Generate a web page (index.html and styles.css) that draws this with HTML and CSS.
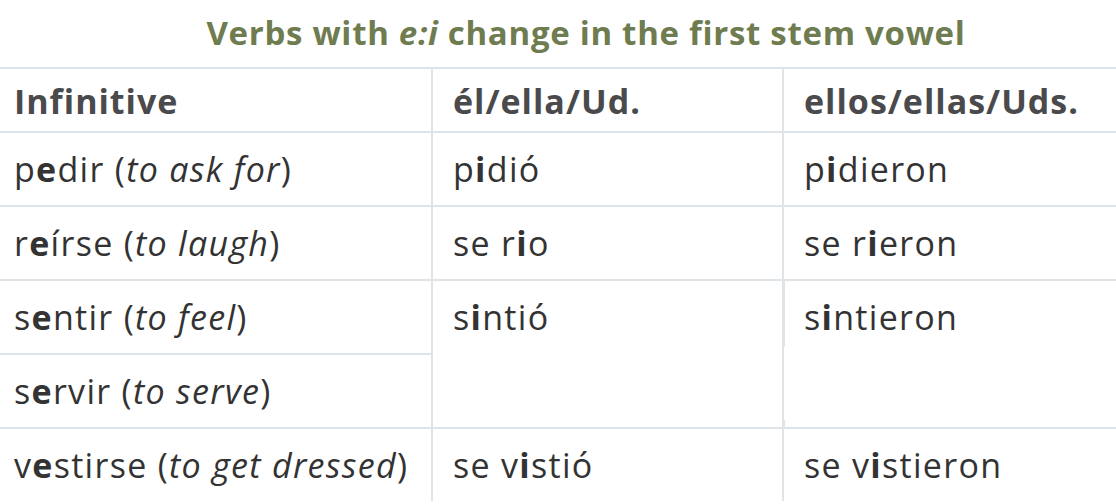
FILE: index.html
```html
<!DOCTYPE html>
<html lang="es">
<head>
<meta charset="utf-8">
<title>Verbs with e:i change</title>
<link rel="stylesheet" href="styles.css">
</head>
<body>
<h1 class="title">Verbs with <em>e:i</em> change in the first stem vowel</h1>
<table class="verbs">
  <colgroup><col class="c1"><col class="c2"><col class="c3"></colgroup>
  <thead>
    <tr><th>Infinitive</th><th>él/ella/Ud.</th><th>ellos/ellas/Uds.</th></tr>
  </thead>
  <tbody>
    <tr><td>p<b>e</b>dir (<i>to ask for</i>)</td><td>p<b>i</b>dió</td><td>p<b>i</b>dieron</td></tr>
    <tr><td>r<b>e</b>írse (<i>to laugh</i>)</td><td>se r<b>i</b>o</td><td>se r<b>i</b>eron</td></tr>
    <tr><td>s<b>e</b>ntir (<i>to feel</i>)</td><td rowspan="2" class="span">s<b>i</b>ntió</td><td rowspan="2" class="span gap">s<b>i</b>ntieron</td></tr>
    <tr><td>s<b>e</b>rvir (<i>to serve</i>)</td></tr>
    <tr><td>v<b>e</b>stirse (<i>to get dressed</i>)</td><td>se v<b>i</b>stió</td><td>se v<b>i</b>stieron</td></tr>
  </tbody>
</table>
</body>
</html>
```

FILE: styles.css
```css
html, body {
  margin: 0;
  padding: 0;
  background: #ffffff;
}
body {
  font-family: "Open Sans", Lato, "Liberation Sans", sans-serif;
  color: #2f2f2f;
  width: 1116px;
  overflow: hidden;
}
.title {
  margin: 0;
  height: 67px;
  line-height: 66px;
  padding-left: 56px;
  text-align: center;
  font-size: 33px;
  font-weight: 700;
  letter-spacing: 0.7px;
  color: #6e7c50;
}
.title em {
  font-style: italic;
}
.verbs {
  border-collapse: collapse;
  width: 1116px;
  table-layout: fixed;
}
.c1 { width: 432px; }
.c2 { width: 351px; }
.c3 { width: 333px; }
.verbs th,
.verbs td {
  border: 2px solid #dfe4e9;
  text-align: left;
  font-size: 34px;
  line-height: 34px;
  padding: 19px 20px;
  white-space: nowrap;
  vertical-align: middle;
}
.verbs td {
  font-weight: 400;
  letter-spacing: 1.3px;
  color: #333333;
}
.verbs th {
  font-weight: 700;
  color: #4a4a4c;
  letter-spacing: 1px;
  padding-top: 15px;
  padding-bottom: 13px;
}
.verbs th:first-child,
.verbs td:first-child {
  border-left: none;
  padding-left: 14px;
}
.verbs th:last-child,
.verbs td:last-child {
  border-right: none;
}
.verbs tr:last-child td {
  border-bottom: none;
}
.verbs td b {
  font-weight: 700;
}
.verbs td i {
  font-style: italic;
}
.verbs td.span {
  vertical-align: top;
}
.verbs td.gap {
  border-left-color: transparent;
  background-image: linear-gradient(to bottom, #dfe4e9 0, #dfe4e9 66px, transparent 66px, transparent 139px, #dfe4e9 139px);
  background-size: 2px 100%;
  background-repeat: no-repeat;
  background-position: -1px 0;
}
```
